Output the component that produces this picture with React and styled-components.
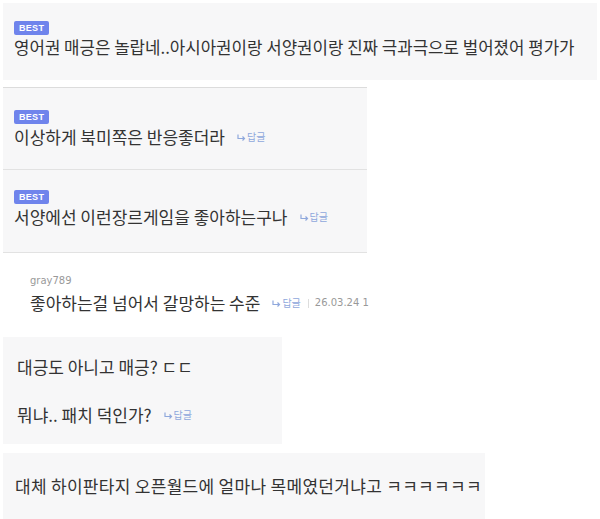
import React from "react";
import styled, { createGlobalStyle } from "styled-components";

const GlobalStyle = createGlobalStyle`
  body {
    margin: 0;
    background: #ffffff;
    font-family: "Noto Sans CJK KR", "Noto Sans", sans-serif;
    color: #333;
  }
`;

const Page = styled.div`
  display: flex;
  flex-direction: column;
  align-items: flex-start;
  padding: 3px 0 0 3px;
  width: 600px;
  height: 519px;
  overflow: hidden;
  box-sizing: border-box;
`;

const Card = styled.div`
  box-sizing: border-box;
  width: ${(p) => p.$w}px;
  height: ${(p) => p.$h}px;
  margin-top: ${(p) => p.$mt || 0}px;
  padding: ${(p) => p.$pad};
  background: #f7f7f8;
  border-top: ${(p) => (p.$top ? "1px solid #dcdcdc" : "none")};
  border-bottom: ${(p) => (p.$bottom ? "1px solid #e2e2e2" : "none")};
  flex-shrink: 0;
`;

const Plain = styled.div`
  box-sizing: border-box;
  width: 364px;
  margin-top: 22px;
  padding-left: 27px;
  white-space: nowrap;
  flex-shrink: 0;
`;

const Badge = styled.div`
  width: fit-content;
  background: #6f84ec;
  color: #fff;
  font-family: "Liberation Sans", Arial, sans-serif;
  font-weight: 700;
  font-size: 9px;
  line-height: 14px;
  height: 14px;
  padding: 0 5px;
  border-radius: 2px;
  letter-spacing: 0.3px;
`;

const Line = styled.div`
  font-size: ${(p) => p.$size || 17}px;
  letter-spacing: ${(p) => p.$ls || 0}px;
  line-height: 20px;
  color: #333;
  white-space: nowrap;
  margin-top: ${(p) => p.$mt || 0}px;
  display: flex;
  align-items: center;
`;

const User = styled.div`
  font-family: "DejaVu Sans", sans-serif;
  font-size: 10px;
  color: #999;
  line-height: 12px;
`;

const Reply = styled.span`
  font-size: 10px;
  letter-spacing: 0;
  color: #8fa8dc;
  margin-left: 12px;
  display: inline-flex;
  align-items: center;
  gap: 1px;
`;

const Meta = styled.span`
  font-family: "DejaVu Sans", sans-serif;
  font-size: 10px;
  letter-spacing: 0;
  color: #999;
  display: inline-flex;
  align-items: center;
`;

const Sep = styled.span`
  width: 1px;
  height: 9px;
  background: #ddd;
  margin: 0 6px 0 7px;
`;

const ReplyLink = () => (
  <Reply>
    <svg width="9" height="7" viewBox="0 0 9 7">
      <path d="M1 0.5V4.5H7.5M5.5 2.5L7.5 4.5L5.5 6.5" fill="none" stroke="#8fa8dc" strokeWidth="1.2" />
    </svg>
    답글
  </Reply>
);

export default function App() {
  return (
    <>
      <GlobalStyle />
      <Page>
        <Card $w={594} $h={77} $pad="18px 11px 0">
          <Badge>BEST</Badge>
          <Line $mt={2} $size={16.8}>
            영어권 매긍은 놀랍네..아시아권이랑 서양권이랑 진짜 극과극으로 벌어졌어 평가가
          </Line>
        </Card>

        <Card $w={364} $h={83} $mt={7} $top $bottom $pad="22px 11px 0">
          <Badge>BEST</Badge>
          <Line $mt={3}>
            이상하게 북미쪽은 반응좋더라
            <ReplyLink />
          </Line>
        </Card>

        <Card $w={364} $h={83} $bottom $pad="20px 11px 0">
          <Badge>BEST</Badge>
          <Line $mt={3}>
            서양에선 이런장르게임을 좋아하는구나
            <ReplyLink />
          </Line>
        </Card>

        <Plain>
          <User>gray789</User>
          <Line $mt={6}>
            좋아하는걸 넘어서 갈망하는 수준
            <ReplyLink />
            <Meta>
              <Sep />
              26.03.24 1
            </Meta>
          </Line>
        </Plain>

        <Card $w={279} $h={107} $mt={24} $pad="20px 14px 0">
          <Line>대긍도 아니고 매긍? ㄷㄷ</Line>
          <Line $mt={28}>
            뭐냐.. 패치 덕인가?
            <ReplyLink />
          </Line>
        </Card>

        <Card $w={482} $h={70} $mt={9} $pad="23px 12px 0">
          <Line $ls={0.3}>대체 하이판타지 오픈월드에 얼마나 목메였던거냐고 ㅋㅋㅋㅋㅋㅋ</Line>
        </Card>
      </Page>
    </>
  );
}
